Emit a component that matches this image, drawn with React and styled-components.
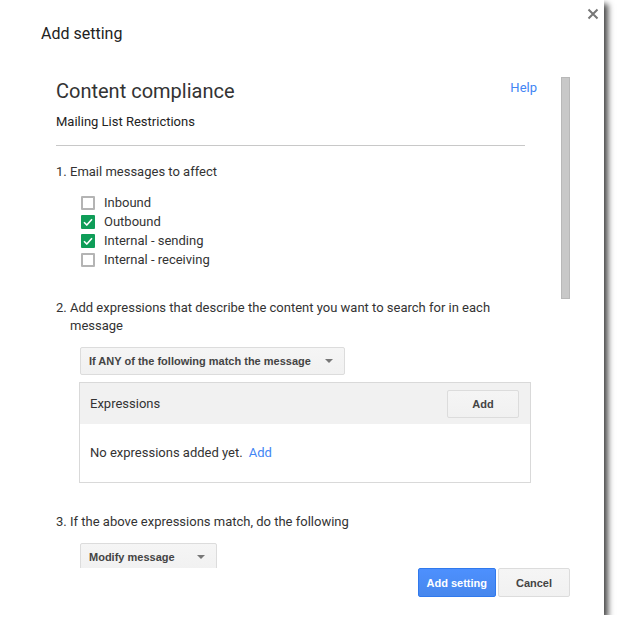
import React from "react";
import styled, { createGlobalStyle } from "styled-components";

const GlobalStyle = createGlobalStyle`
  html, body {
    margin: 0;
    padding: 0;
    background: #fff;
  }
  body {
    font-family: Roboto, "Liberation Sans", Arial, sans-serif;
    color: #222;
  }
`;

const Dialog = styled.div`
  width: 604px;
  height: 615px;
  background: #fff;
  box-shadow: 4px 4px 6px rgba(0, 0, 0, 0.72);
  display: flex;
  flex-direction: column;
  position: relative;
`;

const Header = styled.div`
  height: 77px;
  box-sizing: border-box;
  padding: 24px 0 0 41px;
`;

const Title = styled.div`
  font-size: 16px;
  line-height: 20px;
  color: #222;
`;

const CloseButton = styled.button`
  position: absolute;
  top: 8px;
  right: 5px;
  width: 12px;
  height: 12px;
  padding: 0;
  border: 0;
  background: none;
  cursor: pointer;
  display: flex;
`;

const ScrollRow = styled.div`
  display: flex;
  height: 491px;
  padding-left: 56px;
  gap: 24px;
`;

const ScrollContent = styled.div`
  width: 481px;
  overflow: hidden;
`;

const Track = styled.div`
  width: 9px;
`;

const Thumb = styled.div`
  height: 222px;
  box-sizing: border-box;
  background: #c8c8c8;
  border: 1px solid #b8b8b8;
`;

const HeadingRow = styled.div`
  display: flex;
  justify-content: space-between;
  align-items: flex-start;
`;

const Heading = styled.h2`
  margin: 0;
  font-size: 20px;
  font-weight: 400;
  line-height: 28px;
  color: #333;
`;

const Link = styled.a`
  color: #4285f4;
  font-size: 13px;
  line-height: ${(p) => p.$lh || "18px"};
  text-decoration: none;
  cursor: pointer;
`;

const Subtitle = styled.div`
  margin-top: 8px;
  font-size: 13px;
  line-height: 18px;
  color: #222;
`;

const Divider = styled.hr`
  margin: 14px 12px 0 0;
  border: 0;
  border-top: 1px solid #c8c8c8;
  height: 0;
`;

const Steps = styled.ol`
  margin: 17px 0 0 0;
  padding: 0;
  list-style: none;
`;

const Step = styled.li`
  margin-top: ${(p) => p.$top || "0px"};
  font-size: 13px;
  line-height: 18px;
  color: #333;
`;

const StepTitle = styled.div`
  display: flex;
  padding-right: 40px;
`;

const StepNum = styled.span`
  width: 14px;
  flex: none;
`;

const CheckList = styled.div`
  margin: 12px 0 0 25px;
  display: flex;
  flex-direction: column;
`;

const CheckRow = styled.label`
  display: flex;
  align-items: center;
  height: 19px;
  gap: 9px;
  color: #333;
`;

const Box = styled.span`
  width: 14px;
  height: 14px;
  box-sizing: border-box;
  border-radius: 1px;
  border: ${(p) => (p.$checked ? "none" : "2px solid #b4b4b4")};
  background: ${(p) => (p.$checked ? "#0f9d58" : "#fff")};
  display: flex;
  align-items: center;
  justify-content: center;
`;

const Select = styled.div`
  margin: 12px 0 0 24px;
  width: ${(p) => p.$w};
  height: 28px;
  box-sizing: border-box;
  border: 1px solid #dcdcdc;
  border-radius: 2px;
  background: linear-gradient(#f5f5f5, #f1f1f1);
  display: flex;
  align-items: center;
  justify-content: space-between;
  padding: 0 8px 0 8px;
  font-family: "Liberation Sans", Arial, sans-serif;
  font-size: 11px;
  font-weight: 700;
  color: #444;
`;

const Caret = styled.span`
  width: 0;
  height: 0;
  border-left: 4px solid transparent;
  border-right: 4px solid transparent;
  border-top: 4px solid #777;
  margin-right: 3px;
`;

const ExprBox = styled.div`
  margin: 7px 0 0 23px;
  width: 452px;
  box-sizing: border-box;
  border: 1px solid #d9d9d9;
`;

const ExprHeader = styled.div`
  height: 41px;
  background: #f1f1f1;
  display: flex;
  align-items: center;
  justify-content: space-between;
  padding: 0 11px 0 10px;
`;

const ExprTitle = styled.span`
  font-size: 13px;
  color: #333;
`;

const ExprBody = styled.div`
  height: 58px;
  display: flex;
  align-items: center;
  padding-left: 10px;
  gap: 6px;
  font-size: 13px;
  color: #333;
`;

const Button = styled.button`
  height: ${(p) => p.$h || "29px"};
  min-width: ${(p) => p.$w};
  box-sizing: border-box;
  padding: 0 8px;
  border-radius: 2px;
  border: 1px solid ${(p) => (p.$primary ? "#3079ed" : "#dcdcdc")};
  background: ${(p) =>
    p.$primary ? "linear-gradient(#4d90fe, #4787ed)" : "linear-gradient(#f5f5f5, #f1f1f1)"};
  color: ${(p) => (p.$primary ? "#fff" : "#444")};
  font-family: "Liberation Sans", Arial, sans-serif;
  font-size: 11px;
  font-weight: 700;
  cursor: pointer;
`;

const Footer = styled.div`
  display: flex;
  justify-content: flex-end;
  gap: 2px;
  padding: 0 34px 0 0;
`;

function Checkbox({ checked, label }) {
  return (
    <CheckRow>
      <Box $checked={checked}>
        {checked && (
          <svg width="10" height="8" viewBox="0 0 10 8">
            <path d="M1 4.2 L3.8 7 L9 1.2" fill="none" stroke="#fff" strokeWidth="1.6" />
          </svg>
        )}
      </Box>
      {label}
    </CheckRow>
  );
}

export default function App() {
  return (
    <>
      <GlobalStyle />
      <Dialog>
        <Header>
          <Title>Add setting</Title>
        </Header>
        <CloseButton aria-label="Close">
          <svg width="12" height="12" viewBox="0 0 12 12">
            <path d="M1.5 1.5 L10.5 10.5 M10.5 1.5 L1.5 10.5" stroke="#777" strokeWidth="2" />
          </svg>
        </CloseButton>

        <ScrollRow>
          <ScrollContent>
            <HeadingRow>
              <Heading>Content compliance</Heading>
              <Link $lh="22px">Help</Link>
            </HeadingRow>
            <Subtitle>Mailing List Restrictions</Subtitle>
            <Divider />

            <Steps>
              <Step>
                <StepTitle>
                  <StepNum>1.</StepNum>
                  <span>Email messages to affect</span>
                </StepTitle>
                <CheckList>
                  <Checkbox label="Inbound" />
                  <Checkbox checked label="Outbound" />
                  <Checkbox checked label="Internal - sending" />
                  <Checkbox label="Internal - receiving" />
                </CheckList>
              </Step>

              <Step $top="30px">
                <StepTitle>
                  <StepNum>2.</StepNum>
                  <span>
                    Add expressions that describe the content you want to search for in each
                    message
                  </span>
                </StepTitle>
                <Select $w="265px">
                  If ANY of the following match the message
                  <Caret />
                </Select>
                <ExprBox>
                  <ExprHeader>
                    <ExprTitle>Expressions</ExprTitle>
                    <Button $w="72px" $h="28px">Add</Button>
                  </ExprHeader>
                  <ExprBody>
                    No expressions added yet.
                    <Link>Add</Link>
                  </ExprBody>
                </ExprBox>
              </Step>

              <Step $top="30px">
                <StepTitle>
                  <StepNum>3.</StepNum>
                  <span>If the above expressions match, do the following</span>
                </StepTitle>
                <Select $w="137px">
                  Modify message
                  <Caret />
                </Select>
              </Step>
            </Steps>
          </ScrollContent>
          <Track>
            <Thumb />
          </Track>
        </ScrollRow>

        <Footer>
          <Button $primary $w="78px">Add setting</Button>
          <Button $w="72px">Cancel</Button>
        </Footer>
      </Dialog>
    </>
  );
}
